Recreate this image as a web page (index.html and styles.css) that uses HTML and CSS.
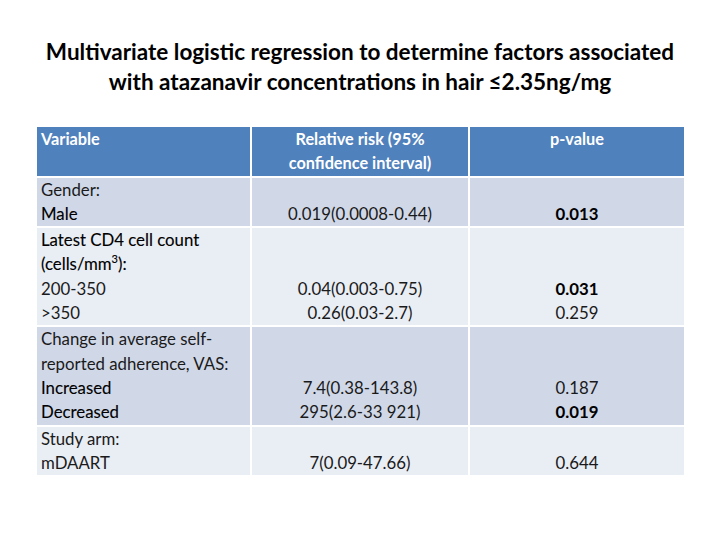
FILE: index.html
```html
<!DOCTYPE html>
<html>
<head>
<meta charset="utf-8">
<link rel="stylesheet" href="styles.css">
</head>
<body>
<div class="slide">
  <h1 class="title">Multivariate logistic regression to determine factors associated<br>with atazanavir concentrations in hair ≤2.35ng/mg</h1>
  <table class="grid">
    <colgroup>
      <col class="c1"><col class="c2"><col class="c3">
    </colgroup>
    <thead>
      <tr>
        <th class="var">Variable</th>
        <th>Relative risk (95%<br>confidence interval)</th>
        <th>p-value</th>
      </tr>
    </thead>
    <tbody>
      <tr class="dark">
        <td class="var">Gender:<br><span class="em">Male</span></td>
        <td>0.019(0.0008-0.44)</td>
        <td><b>0.013</b></td>
      </tr>
      <tr class="light">
        <td class="var"><span class="em">Latest CD4 cell count<br>(cells/mm<sup>3</sup>):</span><br>200-350<br>&gt;350</td>
        <td>0.04(0.003-0.75)<br>0.26(0.03-2.7)</td>
        <td><b>0.031</b><br>0.259</td>
      </tr>
      <tr class="dark">
        <td class="var">Change in average self-<br>reported adherence, VAS:<br><span class="em">Increased<br>Decreased</span></td>
        <td>7.4(0.38-143.8)<br>295(2.6-33 921)</td>
        <td>0.187<br><b>0.019</b></td>
      </tr>
      <tr class="light">
        <td class="var">Study arm:<br>mDAART</td>
        <td>7(0.09-47.66)</td>
        <td>0.644</td>
      </tr>
    </tbody>
  </table>
</div>
</body>
</html>
```

FILE: styles.css
```css
html, body {
  margin: 0;
  padding: 0;
  background: #ffffff;
}

.slide {
  width: 720px;
  height: 540px;
  display: flex;
  flex-direction: column;
  align-items: flex-start;
  font-family: Lato, "Open Sans", sans-serif;
  color: #1a1a1a;
}

.title {
  width: 720px;
  margin: 37px 0 0 0;
  font-size: 22.5px;
  font-weight: 700;
  line-height: 30px;
  text-align: center;
  color: #000;
}

.grid {
  margin: 28px 0 0 35px;
  border-collapse: separate;
  border-spacing: 2px;
  table-layout: fixed;
  width: 651px;
  font-size: 16.8px;
  line-height: 24.3px;
}

.c1 { width: 213px; }
.c2 { width: 216px; }
.c3 { width: 214px; }

.grid th, .grid td {
  padding: 0;
  text-align: center;
}

.grid th {
  background: #4f81bd;
  color: #ffffff;
  font-size: 16.3px;
  font-weight: 700;
  vertical-align: top;
}

.grid td {
  vertical-align: bottom;
}

.grid .var {
  text-align: left;
  padding-left: 4px;
}

.grid td.var {
  vertical-align: top;
}

.dark td { background: #d0d8e8; }
.light td { background: #e9edf4; }

.grid b {
  font-weight: 700;
  color: #000;
}

.grid .em {
  color: #000;
  -webkit-text-stroke: 0.12px #000;
}

.grid sup {
  font-size: 11px;
  line-height: 0;
}
```
